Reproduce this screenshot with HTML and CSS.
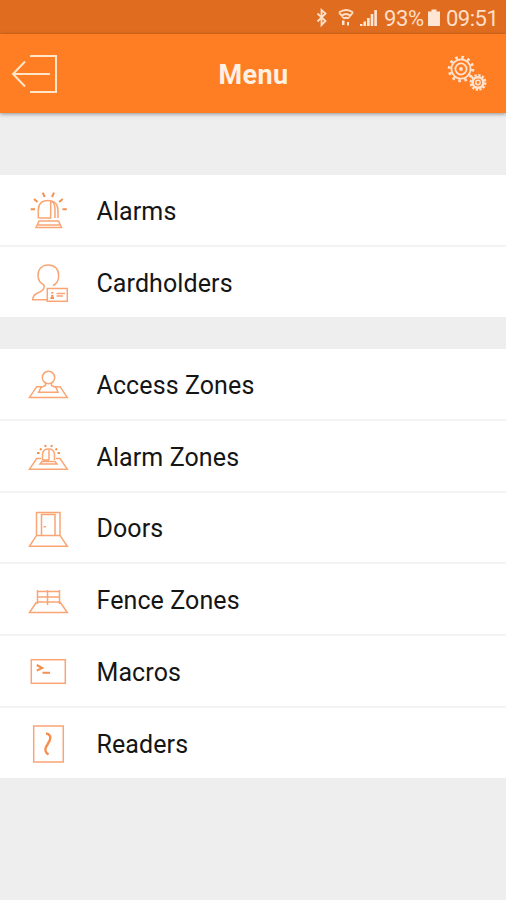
FILE: index.html
```html
<!DOCTYPE html>
<html lang="en">
<head>
<meta charset="utf-8">
<title>Menu</title>
<link rel="stylesheet" href="styles.css">
</head>
<body>
<div class="status">
  <svg class="signals" width="64" height="34" viewBox="0 0 64 34">
    <path class="thin" d="M3.500 13.500l8 7.500-4 4V10l4 3.500-8 8"/>
    <path class="thin" d="M25 12.500q7.500-5 14 0M27.500 15.800q4.500-3.500 9 0M30 18.500q2-1.500 4 0M25 12.500l5 6M39 12.500l-5 6"/>
    <path class="solid" d="M28 20.500h2.500V25h-2.500zM33 22h2v3.500h-2zM46 24h2.500v2h-2.500zM49.500 21.500H52V26h-2.500zM53 18h2.700v8H53zM56.700 14h2.600v12h-2.600zM60.300 10h2.600v16h-2.600z"/>
  </svg>
  <span class="battery-text">93%</span>
  <svg class="battery" width="12" height="34" viewBox="0 0 12 34"><path class="solid" d="M3.500 9.500h5v2H12V26H0V11.500h3.500z"/></svg>
  <span class="clock">09:51</span>
</div>
<header class="bar">
  <svg class="back" width="48" height="42" viewBox="0 0 48 42"><path d="M20 3h26v36H20M40 21H3M15 8.500L3 21l12 12.500"/></svg>
  <h1>Menu</h1>
  <svg class="gears" width="44" height="42" viewBox="0 0 44 42">
    <circle class="teeth" cx="17" cy="16" r="11.800"/>
    <circle cx="17" cy="16" r="9.600"/><circle cx="17" cy="16" r="5.600"/><circle class="dot" cx="17" cy="16" r="1.900"/>
    <circle class="teeth small" cx="34" cy="29.500" r="7.200"/>
    <circle class="inner" cx="34" cy="29.500" r="5.300"/><circle class="core" cx="34" cy="29.500" r="2.200"/>
  </svg>
</header>
<main>
  <ul class="group">
    <li><svg class="icon" viewBox="0 0 48 72"><path d="M14.300 43V35.500C14.300 29 18 25.500 24 25.500S34 29 34 35.500V43M14.300 43H26.700V26M28 26.500Q31 29 31 35V43M15 46H34.500L37.500 52.500H12zM14 50H35.500"/><path class="bold" d="M6.700 34.300H11M10 24l3.500 3M18.700 17.700l2 4.300M30 17.700L28 22M38.700 24l-3.500 3M38.500 34.300h4.300"/></svg><span>Alarms</span></li>
    <li><svg class="icon" viewBox="0 0 48 72"><path d="M20 38C16 36 14 32.500 14 28.500C14 22 18 18 24.300 18S34.700 22 34.700 28.500C34.700 33 32.500 37 29 38.500M20 38C21 43 17 44.500 12.500 46.500Q9 48.500 8.700 52.700H23"/><rect x="23.300" y="41.500" width="20" height="12.800"/><path d="M32.500 46.500H41M32.500 49H39"/><path class="bold" d="M28.300 45v1.500M28.300 48v3M26.500 51h3.500"/></svg><span>Cardholders</span></li>
  </ul>
  <ul class="group">
    <li><svg class="icon" viewBox="0 0 48 72"><circle cx="24.500" cy="28.500" r="6.200"/><path d="M18 37.700H12.700L5.500 48.400H43.300L36 37.700H31M21.500 34V36.500L17 38.500 14.700 43.300H34L32 38.500 27.500 36.500V34"/></svg><span>Access Zones</span></li>
    <li><svg class="icon" viewBox="0 0 48 72"><path d="M17 37.500H12.700L5.500 48.200H43.300L36 37.500H32M18.500 39V33Q19 28 24.500 28T30.500 33V39M25 39V29M18.500 39H25M18 40.500H31L33 43H16z"/><path class="bold" d="M13 32h2.500M16 27.500l1.500 1.500M21 24l.8 2M28 24l-.8 2M33 27.500L31.500 29M36 32h-2.500"/></svg><span>Alarm Zones</span></li>
    <li><svg class="icon" viewBox="0 0 48 72"><path d="M12.500 43.400V20.500H36V43.400M17.500 43.400V22.500H31V43.400M12.500 43.400H36L43.300 54.300H5.500zM19.500 34.700h2.500"/></svg><span>Doors</span></li>
    <li><svg class="icon" viewBox="0 0 48 72"><path d="M13 27.500H36M13 33H36M13 38H36M13.500 26V40M23.500 26V41M35.500 26V40M12.500 38L5.500 48.500H43.300L36 38"/></svg><span>Fence Zones</span></li>
    <li><svg class="icon" viewBox="0 0 48 72"><rect x="7.300" y="23.700" width="34" height="23.600"/><path class="bold" d="M12.700 29l5.600 3-5.600 2.700M18.500 36.700H26"/></svg><span>Macros</span></li>
    <li><svg class="icon" viewBox="0 0 48 72"><rect x="9.700" y="18" width="29.600" height="36"/><path class="curve" d="M22 25.500C26 26 27.500 29 25.500 33L22 39C20.500 42 22 45 24.500 46.500"/></svg><span>Readers</span></li>
  </ul>
</main>
</body>
</html>
```
FILE: styles.css
```css
* { box-sizing: border-box; }
body {
  margin: 0;
  height: 900px;
  overflow: hidden;
  background: #eee;
  color: #151515;
  font-family: Roboto, "Liberation Sans", sans-serif;
}
svg { display: block; flex: none; fill: none; }
.status {
  height: 34px;
  display: flex;
  align-items: center;
  justify-content: flex-end;
  padding-right: 9px;
  background: #e06d1f;
  color: #ffdfca;
  font-size: 22px;
  line-height: 34px;
}
.status span { padding-top: 3px; white-space: nowrap; }
.signals { margin-right: 6px; }
.battery-text { width: 39px; letter-spacing: -.4px; }
.battery { margin: 0 6px 0 5px; }
.clock { width: 51px; letter-spacing: -.5px; }
.thin { stroke: #ffdfca; stroke-width: 1.8; }
.solid { fill: #ffe5d4; }
.bar {
  position: relative;
  height: 79px;
  display: flex;
  align-items: center;
  justify-content: space-between;
  padding: 0 18px 0 10px;
  background: #ff7e23;
  box-shadow: 0 1px 4px rgba(0, 0, 0, .4);
}
.bar h1 {
  margin: 2px 0 0 5px;
  color: #fff0e4;
  font-size: 27px;
  font-weight: 700;
  letter-spacing: .4px;
}
.back { stroke: #ffe6c8; stroke-width: 2; }
.gears { stroke: #ffe3d0; stroke-width: 1.8; }
.teeth { stroke-width: 3; stroke-dasharray: 2.6 3.578; }
.small { stroke-width: 2.500; stroke-dasharray: 2.3 1.470; }
.inner { stroke-width: 2.500; }
.core { stroke-width: 1.500; }
.dot { fill: #ffe3d0; stroke: none; }
main { padding-top: 62px; }
.group { list-style: none; margin: 0 0 31.700px; padding: 0; }
.group li {
  height: 71.800px;
  display: flex;
  align-items: center;
  padding: 2px 0 0 24px;
  background: #fff;
  font-size: 25px;
  letter-spacing: .1px;
}
.group li:last-child { height: 70.500px; }
.group li:not(:last-child) { border-bottom: 2px solid #f3f3f3; }
.group span { margin-left: 24.500px; padding-top: 1px; }
.icon { width: 48px; height: 72px; stroke: #f9a574; stroke-width: 1.500; }
.bold { stroke: #f58f50; stroke-width: 2; }
.curve { stroke: #f58f50; stroke-width: 2.500; }
```
